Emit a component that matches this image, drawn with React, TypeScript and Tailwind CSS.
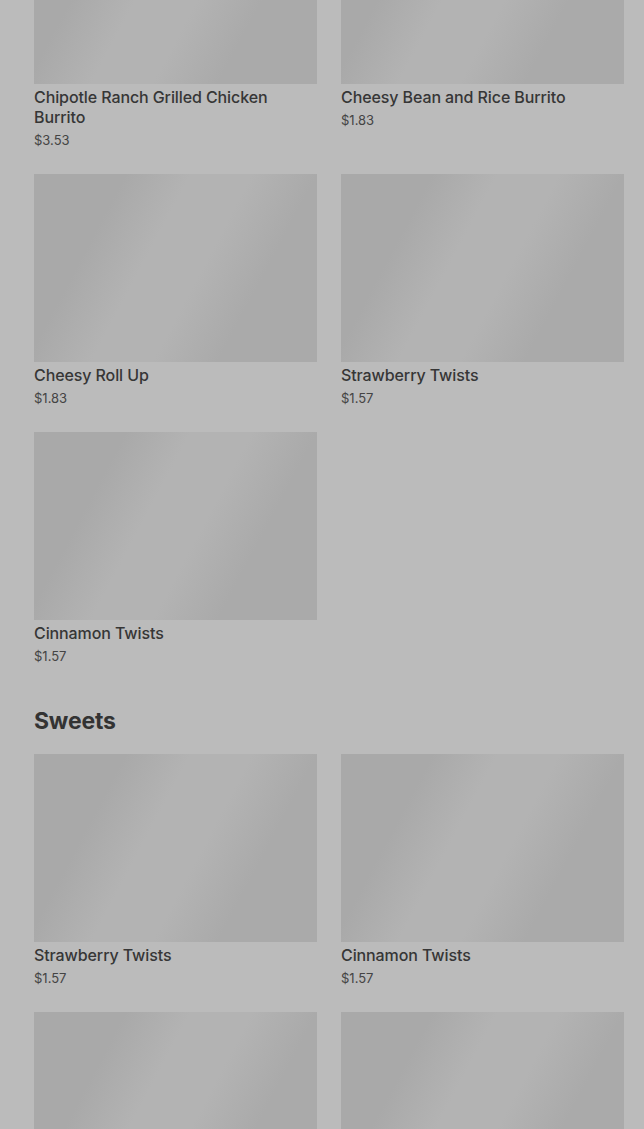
import React from "react";

type Item = { name: string; price: string };

const section1: Item[] = [
  { name: "Chipotle Ranch Grilled Chicken Burrito", price: "$3.53" },
  { name: "Cheesy Bean and Rice Burrito", price: "$1.83" },
  { name: "Cheesy Roll Up", price: "$1.83" },
  { name: "Strawberry Twists", price: "$1.57" },
  { name: "Cinnamon Twists", price: "$1.57" },
];

const sweets: Item[] = [
  { name: "Strawberry Twists", price: "$1.57" },
  { name: "Cinnamon Twists", price: "$1.57" },
  { name: "", price: "" },
  { name: "", price: "" },
];

function Card({ item }: { item: Item }) {
  return (
    <div className="flex flex-col">
      <div className="h-[188px] w-full bg-[#aaaaaa] bg-[linear-gradient(118deg,#a9a9a9_24%,#b3b3b3_41%,#b3b3b3_57%,#aaaaaa_74%)]" />
      {item.name && (
        <>
          <div className="mt-[3px] text-[16px] leading-[20px] font-medium text-[#363636] pr-8 tracking-[-0.1px]">
            {item.name}
          </div>
          <div className="mt-[3px] text-[13px] leading-[20px] text-[#444444]">{item.price}</div>
        </>
      )}
    </div>
  );
}

export default function App() {
  return (
    <div
      className="h-[1129px] overflow-hidden bg-[#bbbbbb]"
      style={{ fontFamily: "Inter, 'Noto Sans', sans-serif" }}
    >
      <div className="mt-[-104px] pl-[34px] pr-[20px]">
        <div className="grid grid-cols-2 gap-x-6 gap-y-6">
          {section1.map((it, i) => (
            <Card key={i} item={it} />
          ))}
        </div>
        <h2 className="mt-[39px] mb-[17px] text-[23px] leading-[32px] font-bold text-[#333333] tracking-[-0.2px]">Sweets</h2>
        <div className="grid grid-cols-2 gap-x-6 gap-y-6">
          {sweets.map((it, i) => (
            <Card key={i} item={it} />
          ))}
        </div>
      </div>
    </div>
  );
}
